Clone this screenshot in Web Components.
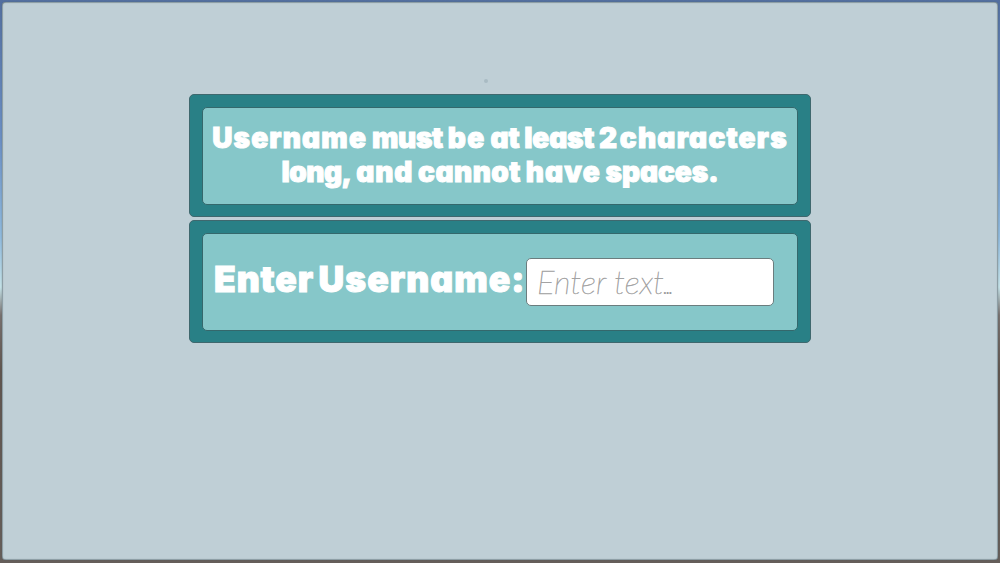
<!DOCTYPE html>
<html lang="en">
<head>
<meta charset="utf-8">
<title>Enter Username</title>
<style>
  html,
  body {
    margin: 0;
    width: 1000px;
    height: 563px;
    overflow: hidden;
  }
</style>
</head>
<body>
<game-screen>
  <game-panel>
    <game-message>
      <game-text widths="155 71 38 29 70 16 168">Username must be at least 2 characters</game-text>
      <game-text widths="70 57 103 75 113">long, and cannot have spaces.</game-text>
    </game-message>
  </game-panel>
  <game-panel>
    <game-field placeholder="Enter text...">
      <game-text widths="100 207">Enter Username:</game-text>
    </game-field>
  </game-panel>
</game-screen>

<script>
class GameScreen extends HTMLElement {
  constructor() {
    super();
    this.attachShadow({ mode: "open" });
  }

  static get styles() {
    return /* css */`
      :host {
        display: block;
        box-sizing: border-box;
        width: 1000px;
        height: 563px;
        padding: 2px 2px 3px;
        font-family: Inter, "Liberation Sans", sans-serif;
        background: linear-gradient(to bottom, #536f9f 0, #6b8fc4 25%, #8fb9dc 42%, #c3e0e6 51%, #77706e 56%, #60554f 66%, #655e5a 100%);
      }

      .sheet {
        position: relative;
        box-sizing: border-box;
        height: 100%;
        padding-top: 92px;
        display: flex;
        flex-direction: column;
        align-items: center;
        gap: 3px;
        border-radius: 4px;
        background: #bfcfd6;
        box-shadow: 0 0 1px #4b5a60, inset 0 0 1px 0.5px #5f7077;
      }

      .speck {
        position: absolute;
        left: 482px;
        top: 77px;
        width: 4px;
        height: 4px;
        border-radius: 50%;
        background: #a9bbc3;
        filter: blur(0.7px);
      }
    `;
  }

  connectedCallback() {
    this.shadowRoot.innerHTML = /* html */`
    <style>${GameScreen.styles}</style>
    <div class="sheet">
      <i class="speck"></i>
      <slot></slot>
    </div>`;
  }
}

class GamePanel extends HTMLElement {
  constructor() {
    super();
    this.attachShadow({ mode: "open" });
  }

  static get styles() {
    return /* css */`
      :host {
        display: block;
        box-sizing: border-box;
        width: 622px;
        height: 123px;
        padding: 12px;
        border: 1px solid #3f686e;
        border-radius: 5px;
        background: #298086;
      }

      .inner {
        box-sizing: border-box;
        height: 98px;
        border: 1px solid #34686c;
        border-radius: 5px;
        background: #86c7c9;
      }
    `;
  }

  connectedCallback() {
    this.shadowRoot.innerHTML = /* html */`
    <style>${GamePanel.styles}</style>
    <div class="inner"><slot></slot></div>`;
  }
}

// One line of heavy text, each word tracked out to its own width
class GameText extends HTMLElement {
  constructor() {
    super();
    this.attachShadow({ mode: "open" });
  }

  static get styles() {
    return /* css */`
      :host {
        display: block;
        color: #fff;
        font-weight: 900;
        font-feature-settings: "cv11" 1;
        -webkit-text-stroke: 1px #fff;
        white-space: nowrap;
        word-spacing: var(--word-gap, -0.8px);
      }

      span {
        display: inline-block;
      }
    `;
  }

  connectedCallback() {
    const words = this.textContent.trim().split(" ");
    const widths = this.getAttribute("widths").split(" ").map(Number);

    this.shadowRoot.innerHTML = /* html */`
    <style>${GameText.styles}</style>
    ${words.map(word => `<span>${word}</span>`).join(" ")}`;

    this.shadowRoot.querySelectorAll("span").forEach((span, i) => {
      const extra = widths[i] - span.getBoundingClientRect().width;
      span.style.letterSpacing = `${extra / words[i].length}px`;
    });
  }
}

class GameMessage extends HTMLElement {
  constructor() {
    super();
    this.attachShadow({ mode: "open" });
  }

  static get styles() {
    return /* css */`
      :host {
        display: flex;
        flex-direction: column;
        align-items: center;
        padding-top: 13px;
        font-size: 28px;
        line-height: 34px;
      }
    `;
  }

  connectedCallback() {
    this.shadowRoot.innerHTML = /* html */`
    <style>${GameMessage.styles}</style>
    <slot></slot>`;
  }
}

class GameField extends HTMLElement {
  constructor() {
    super();
    this.attachShadow({ mode: "open" });
  }

  static get styles() {
    return /* css */`
      :host {
        --word-gap: -2.5px;

        display: flex;
        align-items: center;
        box-sizing: border-box;
        height: 96px;
        padding-left: 11px;
        white-space: nowrap;
      }

      .label {
        width: 312px;
        margin-top: -5px;
        font-size: 35.5px;
      }

      .input {
        box-sizing: border-box;
        width: 248px;
        height: 48px;
        margin-top: -1px;
        padding-left: 10px;
        border: 1px solid #6b7d7e;
        border-radius: 5px;
        background: #fff;
        color: #999;
        font-family: Lato, Inter, sans-serif;
        font-size: 32.5px;
        font-style: italic;
        font-weight: 100;
        letter-spacing: 0.15px;
        line-height: 45px;
        -webkit-text-stroke: 0.6px #a3a3a3;
      }

      .dots {
        margin-left: -2px;
        letter-spacing: -4.5px;
        -webkit-text-stroke: 0;
      }
    `;
  }

  connectedCallback() {
    const hint = this.getAttribute("placeholder");

    this.shadowRoot.innerHTML = /* html */`
    <style>${GameField.styles}</style>
    <div class="label"><slot></slot></div>
    <div class="input">${hint.replace("...", '<span class="dots">...</span>')}</div>`;
  }
}

customElements.define("game-screen", GameScreen);
customElements.define("game-panel", GamePanel);
customElements.define("game-message", GameMessage);
customElements.define("game-field", GameField);
customElements.define("game-text", GameText);
</script>
</body>
</html>
